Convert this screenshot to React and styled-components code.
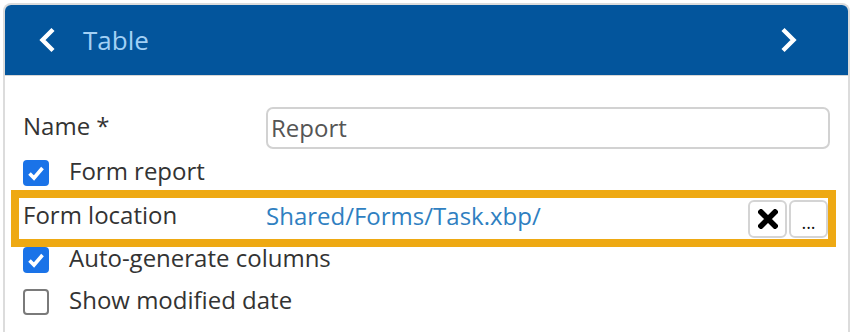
import React from "react";
import styled, { createGlobalStyle } from "styled-components";

const GlobalStyle = createGlobalStyle`
  html, body {
    margin: 0;
    padding: 0;
    background: #fff;
    overflow: hidden;
  }
  body {
    font-family: "Open Sans", "Noto Sans", sans-serif;
  }
`;

const Panel = styled.div`
  margin: 3px 0 0 3px;
  width: 847px;
  height: 329px;
  border: 2px solid #dcdcdc;
  border-bottom: none;
  border-radius: 8px 8px 0 0;
  overflow: hidden;
  background: #fff;
  box-sizing: border-box;
`;

const Header = styled.div`
  height: 71px;
  background: #03559c;
  border-bottom: 1px solid #d6d6d6;
  display: flex;
  align-items: center;
  padding: 0 49px 0 33px;
  box-sizing: border-box;
`;

const NavButton = styled.button`
  border: none;
  background: none;
  padding: 0;
  display: flex;
  align-items: center;
  cursor: pointer;
`;

const Title = styled.div`
  flex: 1;
  margin-left: 25px;
  font-size: 26px;
  color: #a2d0f5;
  line-height: 1;
`;

const Body = styled.div`
  padding: 31px 18px 0 14px;
  display: flex;
  flex-direction: column;
`;

const Row = styled.div`
  display: grid;
  grid-template-columns: 243px 1fr ${(p) => (p.$tools ? "auto" : "")};
  align-items: center;
  height: ${(p) => p.$height || 42}px;
  margin-top: ${(p) => p.$top || 0}px;
  padding-left: 4px;
  box-sizing: border-box;
  ${(p) =>
    p.$highlight &&
    `
    outline: 8px solid #eea913;
    margin-right: 2px;
  `}
`;

const Label = styled.div`
  font-size: 24px;
  color: #333;
  line-height: 1;
  padding-bottom: ${(p) => p.$lift ?? 4}px;
`;

const TextInput = styled.input`
  height: 42px;
  box-sizing: border-box;
  border: 2px solid #d2d2d2;
  border-radius: 7px;
  padding: 0 0 2px 3px;
  font-family: "Open Sans", "Noto Sans", sans-serif;
  font-size: 24px;
  color: #555;
  outline: none;
`;

const PathLink = styled.a`
  font-size: 24px;
  color: #2f7fc1;
  text-decoration: none;
  padding-bottom: 6px;
`;

const Tools = styled.div`
  display: flex;
  gap: 2px;
`;

const ToolButton = styled.button`
  width: 39px;
  height: 38px;
  box-sizing: border-box;
  border: 2px solid #d4d4d4;
  border-radius: 6px;
  background: #fff;
  display: flex;
  align-items: center;
  justify-content: center;
  padding: ${(p) => (p.$dots ? "6px 0 0" : "0")};
  font-family: "Open Sans", sans-serif;
  font-size: 18px;
  color: #111;
  cursor: pointer;
`;

const CheckRow = styled.label`
  display: flex;
  align-items: center;
  gap: 20px;
  height: ${(p) => p.$height || 42}px;
  margin-top: ${(p) => p.$top || 0}px;
  padding-left: 4px;
  font-size: 24px;
  color: #333;
  cursor: pointer;
`;

const Box = styled.span`
  width: 26px;
  height: 26px;
  box-sizing: border-box;
  border-radius: 4px;
  flex-shrink: 0;
  display: flex;
  align-items: center;
  justify-content: center;
  background: ${(p) => (p.$checked ? "#1a73e8" : "#fff")};
  border: ${(p) => (p.$checked ? "none" : "2px solid #7a7a7a")};
`;

const CheckText = styled.span`
  line-height: 1;
  padding-bottom: 4px;
`;

function Chevron({ dir }) {
  const pts = dir === "left" ? "15,2.5 4.5,13 15,23.5" : "4,2.5 14.5,13 4,23.5";
  return (
    <svg width="20" height="26" viewBox="0 0 20 26">
      <polyline points={pts} fill="none" stroke="#fff" strokeWidth="4.4" strokeLinejoin="miter" />
    </svg>
  );
}

function Checkbox({ checked, label, height, top }) {
  return (
    <CheckRow $height={height} $top={top}>
      <Box $checked={checked}>
        {checked && (
          <svg width="18" height="16" viewBox="0 0 18 16">
            <polyline points="2.5,8.5 7,13 15.5,3" fill="none" stroke="#fff" strokeWidth="3.6" />
          </svg>
        )}
      </Box>
      <CheckText>{label}</CheckText>
    </CheckRow>
  );
}

export default function App() {
  return (
    <>
      <GlobalStyle />
      <Panel>
        <Header>
          <NavButton>
            <Chevron dir="left" />
          </NavButton>
          <Title>Table</Title>
          <NavButton>
            <Chevron dir="right" />
          </NavButton>
        </Header>
        <Body>
          <Row>
            <Label>Name *</Label>
            <TextInput defaultValue="Report" />
          </Row>
          <Checkbox checked label="Form report" height={40} top={4} />
          <Row $highlight $tools $height={41} $top={5}>
            <Label $lift={8}>Form location</Label>
            <PathLink href="#">Shared/Forms/Task.xbp/</PathLink>
            <Tools>
              <ToolButton>
                <svg width="20" height="20" viewBox="0 0 20 20">
                  <path d="M3 3 L17 17 M17 3 L3 17" stroke="#000" strokeWidth="5.5" strokeLinecap="square" />
                </svg>
              </ToolButton>
              <ToolButton $dots>...</ToolButton>
            </Tools>
          </Row>
          <Checkbox checked label="Auto-generate columns" />
          <Checkbox label="Show modified date" />
        </Body>
      </Panel>
    </>
  );
}
